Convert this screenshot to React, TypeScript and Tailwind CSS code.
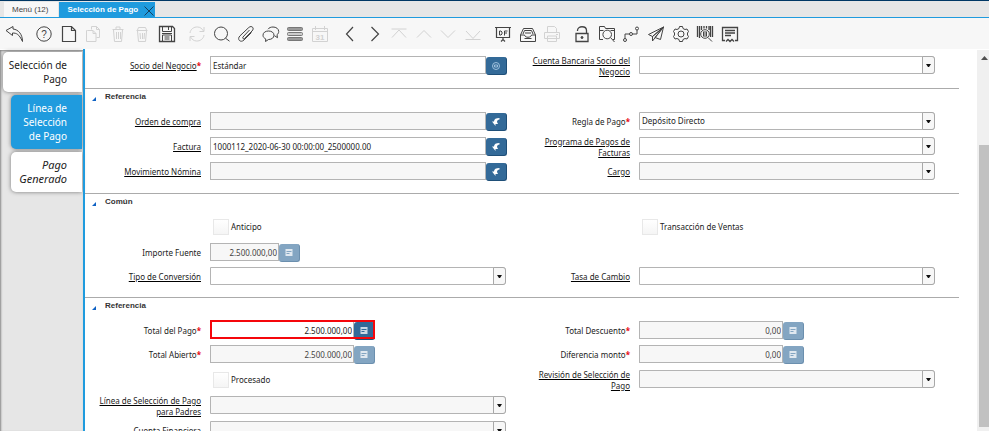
import type { ReactNode } from "react";
import clsx from "clsx";

type IconProps = { children: ReactNode };

function Icon({ children }: IconProps) {
  return (
    <svg
      aria-hidden="true"
      className="h-[18px] w-[18px]"
      fill="none"
      stroke="currentColor"
      strokeWidth="1"
      viewBox="0 0 18 18"
    >
      {children}
    </svg>
  );
}

type Tool = { name: string; off?: boolean; icon: ReactNode };

const toolGroups: { width: string; tools: Tool[] }[] = [
  {
    width: "w-6",
    tools: [
      {
        name: "Deshacer",
        icon: <path d="M8 1.500 1 5.500 7.500 10.500V8c4 0 6.500 1 10 8.500C17.500 9.500 13.500 4.500 8 4Z" />,
      },
    ],
  },
  {
    width: "w-[147px]",
    tools: [
      {
        name: "Ayuda",
        icon: (
          <>
            <circle cx="9" cy="9" r="7.200" />
            <text
              x="9"
              y="12.500"
              textAnchor="middle"
              fill="currentColor"
              stroke="none"
              fontSize="10"
              fontFamily="Liberation Sans, sans-serif"
            >
              ?
            </text>
          </>
        ),
      },
      { name: "Nuevo", icon: <path d="M2.500 1.500h9l4 4v11h-13ZM11.500 1.500v4h4" strokeWidth="1.200" /> },
      {
        name: "Copiar",
        icon: <path d="M7.500 4.500v-3h5l3 3v8h-3M12.500 1.500v3h3M3.500 5.500h5.500l3 3v8h-9.500v-11ZM9 5.500v3h3" />,
        off: true,
      },
      {
        name: "Eliminar",
        icon: <path d="M3.500 4.500h11M7 4.500v-2.500h4v2.500M4.500 5l1 11.500h7l1-11.500M7.500 7v7M9.500 7v7M11.500 7v7" />,
        off: true,
      },
      {
        name: "Eliminar selección",
        icon: <path d="M3.500 5.500h11M4.500 5l1-2.500h7l1 2.500M4.500 6l1 10.500h7l1-10.500M7 8l.500 6M9.500 8v6M11.500 8l-.500 6" />,
        off: true,
      },
      {
        name: "Guardar",
        icon: (
          <>
            <path d="M1.500 1.500h13l2 2v13h-15Z" strokeWidth="1.300" />
            <path d="M4.500 1.500v5h9v-5M10.500 2v3M4.500 16v-6h9v6M6.500 12h5M6.500 14h5M4 8.500h10" />
          </>
        ),
      },
    ],
  },
  {
    width: "w-[147px]",
    tools: [
      {
        name: "Refrescar",
        icon: <path d="M2 8C2.500 4 6 1.800 9.500 2c2.500 0 4.500 1.500 6 4M16 2v4.500h-4.500M16 10c-.500 4-4 6.200-7.500 6-2.500 0-4.500-1.500-6-4M2 16v-4.500h4.500" />,
        off: true,
      },
      {
        name: "Buscar",
        icon: <path d="M8 2a6.500 6.500 0 1 1 0 13 6.500 6.500 0 1 1 0-13ZM12.500 13.200l4 3" />,
      },
      {
        name: "Adjunto",
        icon: <path d="m12.500 5-6.500 7c-1 1.200.500 2.500 1.600 1.500l7.400-7.500c3-3-.500-6-3.200-3.500L3 10.800c-3.500 3.500.500 7.500 4 4.200l7.500-7.500" />,
      },
      {
        name: "Chat",
        icon: (
          <>
            <path d="M6.500 6c3 0 5.500 1.500 5.500 4.200S9.500 14.500 6.500 14.500l-3 2 .300-2.500C2 13 1 12 1 10.200 1 7.500 3.500 6 6.500 6Z" />
            <path d="M6 4.200C7 2.700 9 2 11 2c3 0 5.700 1.700 5.700 4.500 0 1.500-.700 2.500-1.700 3.200l.500 3-3-2" />
          </>
        ),
      },
      {
        name: "Alternar rejilla",
        icon: (
          <g stroke="#777">
            <rect x="1.500" y="2.500" width="15" height="3" rx="1" fill="#999" />
            <rect x="1.500" y="7.500" width="15" height="3" rx="1" fill="#ccc" />
            <rect x="1.500" y="12.500" width="15" height="3" rx="1" fill="#999" />
          </g>
        ),
      },
      {
        name: "Calendario",
        icon: (
          <>
            <path d="M1.500 3.500h15v13h-15ZM1.500 6.500h15M4.500 1v4M13.500 1v4" />
            <text
              x="9"
              y="14.500"
              textAnchor="middle"
              fill="currentColor"
              stroke="none"
              fontSize="8"
              fontFamily="Liberation Sans, sans-serif"
              fontWeight="bold"
            >
              31
            </text>
          </>
        ),
        off: true,
      },
    ],
  },
  {
    width: "w-[147px]",
    tools: [
      { name: "Anterior", icon: <path d="M12 2 5.500 9l6.500 7" strokeWidth="1.200" /> },
      { name: "Siguiente", icon: <path d="m5.500 2 7 7-7 7" strokeWidth="1.200" /> },
      { name: "Primer registro", icon: <path d="M1.500 4h15M2 12.500 9 5l7 7.500" />, off: true },
      { name: "Registro previo", icon: <path d="m2 12.500 7-7 7 7" />, off: true },
      { name: "Próximo registro", icon: <path d="m2 5.500 7 7 7-7" />, off: true },
      { name: "Último registro", icon: <path d="M1.500 14.500h15M2 6l7 7.500L16 6" />, off: true },
    ],
  },
  {
    width: "w-[73px]",
    tools: [
      {
        name: "Reporte",
        icon: (
          <>
            <path d="M1 2.500h16M2.500 3v9.500h13V3M7 16.500l2-2 2 2M9 12v3" strokeWidth="1.200" />
            <path d="M5.500 6v4h1.500l1-1V7L7 6ZM10.500 10.500V6h3M10.500 8h2.500" />
          </>
        ),
      },
      {
        name: "Archivo",
        icon: (
          <>
            <path d="M1.500 10 4.500 3.500h9l3 6.500v6.500h-15ZM1.500 10h4c.500 3 6.500 3 7 0h4M4 9l1.500-3.500h7L14 9" />
            <path d="M6 8h6M5.500 13.500h7" />
          </>
        ),
      },
      {
        name: "Imprimir",
        icon: <path d="M4.500 7V1.500h7l2 2V7M1.500 7.500h15v6h-15ZM4.500 11v5.500h9V11ZM13 9.500h2" />,
        off: true,
      },
    ],
  },
  {
    width: "w-[172px]",
    tools: [
      {
        name: "Bloquear",
        icon: (
          <>
            <path d="M3 8.500h12v8H3ZM4.500 6V5.500c0-5 9-5 9 0v3" strokeWidth="1.300" />
            <circle cx="9" cy="12.500" r="1" fill="currentColor" />
          </>
        ),
      },
      {
        name: "Zoom",
        icon: (
          <>
            <path d="M5 14.500H1.500v-13h5l1 2h9v11H15M1.500 5.500h4M12.500 5.500h4" />
            <circle cx="9.200" cy="9.500" r="4.300" />
            <path d="m12.500 12.500 4 4.500" />
          </>
        ),
      },
      {
        name: "Flujo de trabajo",
        icon: (
          <>
            <circle cx="3" cy="15" r="1.500" />
            <circle cx="9" cy="9" r="1.500" />
            <circle cx="15" cy="3.500" r="1.500" />
            <path d="M3 13.500V9h4.500M10.500 9H15V5" />
          </>
        ),
      },
      {
        name: "Solicitud",
        icon: <path d="M16.500 2 1.500 9.500l4 2ZM16.500 2l-11 9.500V16l2.500-3.200ZM16.500 2l-3 12.500-5.500-2Z" />,
      },
      {
        name: "Proceso",
        icon: (
          <>
            <circle cx="9" cy="9" r="3" />
            <path d="M7.500 1.500h3l.500 2 2 1 2-.500 1.500 2.500-1 1.500v2l1 1.500-1.500 2.500-2-.500-2 1-.500 2h-3l-.500-2-2-1-2 .500L1.500 11.500l1-1.500V8l-1-1.500L3 4l2 .500 2-1Z" />
          </>
        ),
      },
      {
        name: "Información de producto",
        icon: (
          <>
            <path d="M1.500 1v11M3.500 1v12M5.500 1v4M8 1v2.500M10.500 1v2.500M13 1v4M14.500 1v11M16.500 1v11" strokeWidth="1.300" />
            <circle cx="9" cy="9" r="4.300" />
            <path d="M7.500 6.500v5M9 6v6M10.500 6.500v5M12 12.500l4 4" />
          </>
        ),
      },
      {
        name: "Cerrar informe",
        icon: (
          <>
            <path d="M4 15.500H1.500v-13h15v13H14M5 16.500l2-2 2 2 2-2 2 2" strokeWidth="1.300" />
            <path d="M4 5.500h10M4 8h10M4 10.500h6" strokeWidth="1.400" />
          </>
        ),
      },
    ],
  },
];

function Toolbar() {
  return (
    <div
      aria-label="Barra de herramientas"
      className="flex h-[31px] shrink-0 items-center gap-1.5 bg-[#f7f7f7] pl-0.5"
      role="toolbar"
    >
      {toolGroups.map((group) => (
        <div className={clsx("flex shrink-0 justify-between", group.width)} key={group.tools[0].name}>
          {group.tools.map((tool) => (
            <button
              aria-label={tool.name}
              className={clsx(
                "flex w-6 items-center justify-center",
                tool.off ? "text-[#d2d2d2]" : "text-[#444]",
              )}
              disabled={tool.off}
              key={tool.name}
              type="button"
            >
              <Icon>{tool.icon}</Icon>
            </button>
          ))}
        </div>
      ))}
    </div>
  );
}

type FieldProps = {
  id: string;
  label: string;
  link?: boolean;
  required?: boolean;
  readOnly?: boolean;
  value?: string;
};

function FieldLabel({ id, label, link, required }: FieldProps) {
  return (
    <label className="flex h-[19px] items-center justify-end pr-[9px] text-right leading-[11px]" htmlFor={id}>
      <span className="max-w-[108px]">
        <span className={clsx(link && "underline decoration-black decoration-1 underline-offset-1")}>{label}</span>
        {required && <span className="font-bold text-red-600">*</span>}
      </span>
    </label>
  );
}

function SelectField(props: FieldProps) {
  return (
    <>
      <FieldLabel {...props} />
      <div className="relative h-[18px]">
        <select
          className={clsx(
            "block h-full w-full appearance-none rounded-r-[3px] border border-[#b4b4b4] pl-0.5",
            props.readOnly ? "bg-[#f7f7f7]" : "bg-white",
          )}
          defaultValue={props.value}
          id={props.id}
        >
          <option>{props.value}</option>
        </select>
        <span className="pointer-events-none absolute inset-y-0 right-0 flex w-[13px] items-center justify-center rounded-r-[3px] border border-[#a8a8a8] bg-[#f7f7f7]">
          <svg aria-hidden="true" className="h-[3px] w-[5px]" viewBox="0 0 5 3">
            <path d="M0 0h5L3 3H2Z" fill="#111" />
          </svg>
        </span>
      </div>
    </>
  );
}

const lookupIcons = {
  partner: (
    <g fill="none" stroke="#9fc0dc">
      <circle cx="4" cy="4" r="3.500" />
      <path d="M2.500 3h3v2h-3Z" />
    </g>
  ),
  record: <path d="M7.500 0C4 0 2 1 2 3.500H0L3.500 8V6h2.500L5 4C5 2.500 6 1.500 7.500 1.500Z" fill="#fff" />,
  calculator: <path d="M.500 0h7v7h-7ZM1.500 2v1h5V2ZM1.500 4v1h3V4Z" fill="#fff" fillOpacity=".75" fillRule="evenodd" />,
};

type LookupProps = { icon: keyof typeof lookupIcons; label: string; disabled?: boolean };

function LookupButton({ icon, label, disabled }: LookupProps) {
  return (
    <button
      aria-label={label}
      className={clsx(
        "mt-px flex h-[18px] w-[21px] shrink-0 items-center justify-center rounded-[3px] border-r border-b",
        disabled ? "border-[#6b8fae] bg-[#83a5c2]" : "border-[#1f4f78] bg-[#336a98]",
      )}
      disabled={disabled}
      type="button"
    >
      <svg aria-hidden="true" className="h-2 w-2" viewBox="0 0 8 8">
        {lookupIcons[icon]}
      </svg>
    </button>
  );
}

function SearchField({ icon = "record", ...props }: FieldProps & { icon?: "record" | "partner" }) {
  return (
    <>
      <FieldLabel {...props} />
      <div className="-mr-px flex items-start">
        <input
          className={clsx(
            "h-[18px] min-w-0 flex-1 border border-[#b4b4b4] pl-0.5",
            props.readOnly ? "bg-[#f7f7f7]" : "bg-white",
          )}
          defaultValue={props.value}
          id={props.id}
          type="text"
        />
        <LookupButton icon={icon} label={`Buscar ${props.label}`} />
      </div>
    </>
  );
}

function AmountField({ short, marked, ...props }: FieldProps & { short?: boolean; marked?: boolean }) {
  return (
    <>
      <FieldLabel {...props} />
      <div className="relative flex items-start justify-self-start">
        <input
          className={clsx(
            "h-[18px] border border-[#b4b4b4] pr-px text-right",
            short ? "w-[69px]" : "w-36",
            props.readOnly ? "bg-[#f7f7f7] text-[#444]" : "bg-white",
          )}
          defaultValue={props.value}
          id={props.id}
          readOnly={props.readOnly}
          type="text"
        />
        <LookupButton disabled={props.readOnly} icon="calculator" label={`Calcular ${props.label}`} />
        {marked && <span className="pointer-events-none absolute inset-x-0 -top-px bottom-px border-2 border-[#f5060b]" />}
      </div>
    </>
  );
}

function CheckField({ id, label }: FieldProps) {
  return (
    <div className="col-span-2 grid grid-cols-subgrid">
      <div className="col-start-2 flex h-5 items-center gap-0.5 pl-[3px]">
        <input
          className="h-4 w-4 appearance-none border border-[#e8e8e8] bg-linear-to-b from-white to-[#f5f5f5]"
          id={id}
          type="checkbox"
        />
        <label htmlFor={id}>{label}</label>
      </div>
    </div>
  );
}

function Row({ children, className = "min-h-[25px]" }: { children: ReactNode; className?: string }) {
  return (
    <div className={clsx("grid grid-cols-[125fr_296fr_133fr_296fr] items-start pt-[3px] pr-6", className)}>
      {children}
    </div>
  );
}

function Section({ title, children }: { title: string; children: ReactNode }) {
  return (
    <section className="border-t border-[#ababab] pb-2">
      <h2 className="flex h-5 items-center pb-1 pl-[7px] font-['Liberation_Sans',sans-serif] font-bold text-[#333]">
        <svg aria-hidden="true" className="mt-1 mr-[9px] h-1 w-1" viewBox="0 0 4 4">
          <path d="M4 0v4H0Z" fill="#0f62c4" />
        </svg>
        {title}
      </h2>
      {children}
    </section>
  );
}

function PaymentForm() {
  return (
    <form className="mr-[18px] min-w-0 flex-1 pt-1 text-[8px]">
      <Row className="min-h-[35px]">
        <SearchField icon="partner" id="partner" label="Socio del Negocio" link required value="Estándar" />
        <SelectField id="bank" label="Cuenta Bancaria Socio del Negocio" link />
      </Row>

      <Section title="Referencia">
        <Row>
          <SearchField id="order" label="Orden de compra" link readOnly />
          <SelectField id="rule" label="Regla de Pago" required value="Depósito Directo" />
        </Row>
        <Row>
          <SearchField id="invoice" label="Factura" link value="1000112_2020-06-30 00:00:00_2500000.00" />
          <SelectField id="schedule" label="Programa de Pagos de Facturas" link />
        </Row>
        <Row className="min-h-[26px]">
          <SearchField id="payroll" label="Movimiento Nómina" link readOnly />
          <SelectField id="charge" label="Cargo" link readOnly />
        </Row>
      </Section>

      <Section title="Común">
        <Row className="min-h-[26px]">
          <CheckField id="prepayment" label="Anticipo" />
          <CheckField id="sales" label="Transacción de Ventas" />
        </Row>
        <Row className="min-h-6">
          <AmountField id="source" label="Importe Fuente" readOnly short value="2.500.000,00" />
        </Row>
        <Row>
          <SelectField id="conversion" label="Tipo de Conversión" link />
          <SelectField id="rate" label="Tasa de Cambio" link />
        </Row>
      </Section>

      <Section title="Referencia">
        <Row className="min-h-6">
          <AmountField id="total" label="Total del Pago" marked required value="2.500.000,00" />
          <AmountField id="discount" label="Total Descuento" readOnly required value="0,00" />
        </Row>
        <Row>
          <AmountField id="open" label="Total Abierto" readOnly required value="2.500.000,00" />
          <AmountField id="difference" label="Diferencia monto" readOnly required value="0,00" />
        </Row>
        <Row className="min-h-[26px]">
          <CheckField id="processed" label="Procesado" />
          <SelectField id="check" label="Revisión de Selección de Pago" link readOnly />
        </Row>
        <Row>
          <SelectField id="parent" label="Línea de Selección de Pago para Padres" link readOnly />
        </Row>
        <Row>
          <SelectField id="account" label="Cuenta Financiera" link readOnly />
        </Row>
      </Section>
    </form>
  );
}

function Sidebar() {
  const tab = "rounded-l-[5px] py-1.5 pr-[15px] text-right shadow-[0_0_4px_#777]";

  return (
    <nav
      aria-label="Pestañas"
      className="mt-px flex w-[83px] shrink-0 flex-col gap-[3px] bg-[#e6e6e6] pt-0.5 pr-px pl-[3px] text-[10px] leading-[14px] shadow-[inset_1px_1px_2px_#888]"
    >
      <button className={clsx(tab, "bg-white")} type="button">
        Selección de Pago
      </button>
      <button className={clsx(tab, "ml-2 bg-[#1f9bde] pl-3 text-white")} type="button">
        Línea de Selección de Pago
      </button>
      <button className={clsx(tab, "ml-2 bg-white pl-2 text-[11px] leading-[14px] italic")} type="button">
        Pago Generado
      </button>
    </nav>
  );
}

function Scrollbar() {
  return (
    <div aria-hidden="true" className="mt-px flex w-3 shrink-0 flex-col bg-[#f0f0f0] pb-1 pl-0.5">
      <svg className="mt-1.5 ml-0.5 h-1 w-[7px] shrink-0" viewBox="0 0 7 4">
        <path d="M3.500 0 7 4H0Z" fill="#505050" />
      </svg>
      <div className="flex-[85]" />
      <div className="flex-[282] bg-[#c1c1c1]" />
    </div>
  );
}

export default function App() {
  return (
    <div className="flex h-screen flex-col overflow-hidden border-t border-[#003764] bg-white font-['Noto_Sans','Open_Sans',sans-serif] text-[#222]">
      <header className="flex h-[17px] shrink-0 gap-px border-b border-[#1f9bde] bg-[#e6e6e6] pt-px pl-1 font-['Liberation_Sans',sans-serif] text-[8px]">
        <button className="bg-[#f7f7f7] pr-2.5 pl-2 text-[#444]" type="button">
          Menú (12)
        </button>
        <button className="flex items-center gap-1.5 bg-[#1f9bde] pr-px pl-2 font-bold text-white" type="button">
          Selección de Pago
          <svg aria-hidden="true" className="mt-0.5 h-2.5 w-2.5" viewBox="0 0 10 10">
            <path d="m.500.500 9 9M9.500.500l-9 9" stroke="#16405f" />
          </svg>
        </button>
      </header>
      <Toolbar />
      <main className="flex min-h-0 flex-1">
        <Sidebar />
        <div className="flex min-w-0 flex-1 border-l-2 border-[#1f9bde]">
          <PaymentForm />
          <Scrollbar />
        </div>
      </main>
    </div>
  );
}
